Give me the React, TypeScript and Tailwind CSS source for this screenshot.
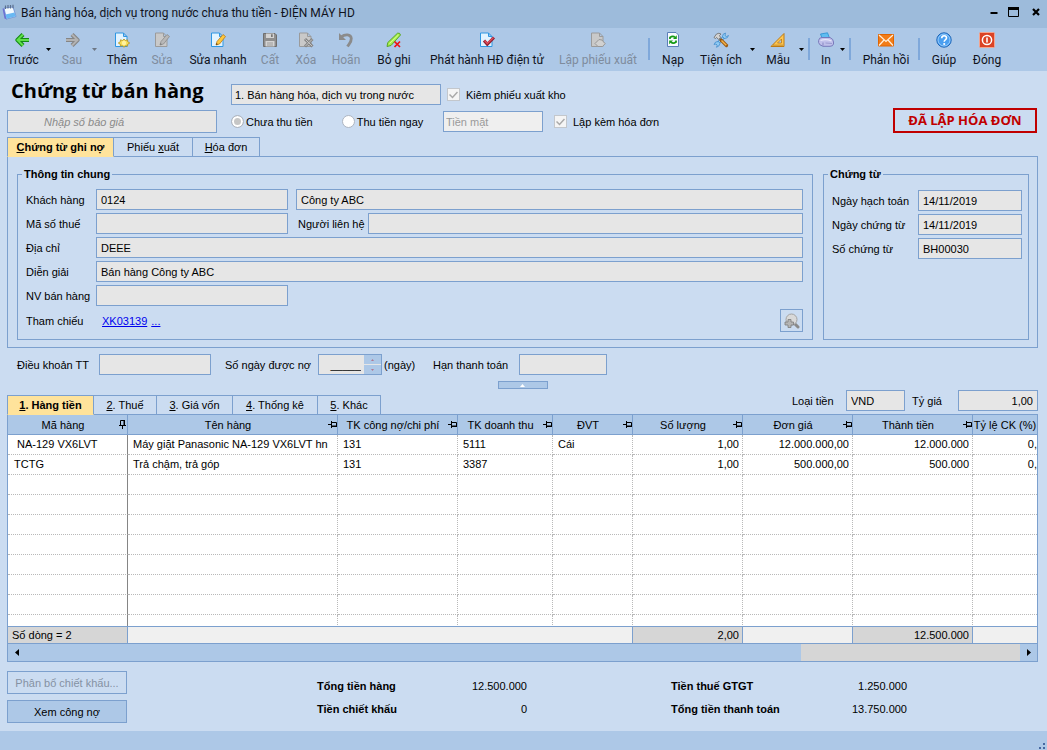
import type { ReactNode } from "react";
import clsx from "clsx";

const FIELD = "h-[21px] min-w-0 border border-[#7ca0ce] bg-[#e6e6e6] px-1 text-[11px] leading-4 text-black outline-none";

/* ---------- toolbar icons ---------- */

function Icon({ children }: { children: ReactNode }) {
  return (
    <svg viewBox="0 0 16 16" className="size-4 shrink-0" aria-hidden="true">
      {children}
    </svg>
  );
}

function Page({ muted }: { muted?: boolean }) {
  return (
    <path
      d="M1.5 1H9.5L13 4.5V14.5H1.5Z M9.5 1V4.5H13"
      fill={muted ? "#c9c9c9" : "#e2f3ff"}
      stroke={muted ? "#9b9b9b" : "#2e97e3"}
    />
  );
}

function Arrow({ muted, right }: { muted?: boolean; right?: boolean }) {
  const d = right ? "M8 2.5 13.5 8 8 13.5M13 8H2" : "M8 2.5 2.500 8 8 13.5M3 8H14";
  return (
    <Icon>
      <path d={d} fill="none" stroke={muted ? "#858585" : "#148a14"} strokeWidth="4.2" strokeLinejoin="round" />
      <path d={d} fill="none" stroke={muted ? "#b2b2b2" : "#5fe04a"} strokeWidth="2" />
    </Icon>
  );
}

function PencilPage({ muted }: { muted?: boolean }) {
  return (
    <Icon>
      <Page muted={muted} />
      <path d="M6 13 7 9.5 13 2.5 15.5 4.5 9.5 12Z" fill={muted ? "#b8b8b8" : "#ffc83d"} stroke={muted ? "#8b8b8b" : "#b87a1c"} strokeWidth=".8" />
      <path d="M6 13 6.5 11 8 12.3Z" fill={muted ? "#777" : "#5a3b12"} />
    </Icon>
  );
}

const icons = {
  back: <Arrow />,
  forward: <Arrow muted right />,
  add: (
    <Icon>
      <Page />
      <path d="M10 7 11.5 8.5 13.5 7.8 13.7 9.7 15.7 11 13.7 12.3 13.5 14.2 11.5 13.7 10 15.3 8.5 13.7 6.5 14.2 6.3 12.3 4.3 11 6.3 9.7 6.5 7.8 8.5 8.5Z" fill="#f5dc55" stroke="#b8901a" strokeWidth=".8" />
      <circle cx="10" cy="11" r="2.2" fill="#fff2a0" />
    </Icon>
  ),
  edit: <PencilPage muted />,
  quickEdit: <PencilPage />,
  save: (
    <Icon>
      <path d="M1.5 1.5H13L14.5 3V14.5H1.5Z" fill="#8f8f8f" stroke="#6f6f6f" />
      <path d="M4 1.5H12V6H4Z M3.5 9H12.5V14.5H3.5Z" fill="#d4d4d4" />
      <path d="M9 2.3H10.7V5H9Z" fill="#777" />
      <path d="M5 11H11M5 13H11" stroke="#9c9c9c" />
    </Icon>
  ),
  remove: (
    <Icon>
      <Page muted />
      <path d="M7 7 14.5 14.5M14.5 7 7 14.5" stroke="#858585" strokeWidth="3" />
      <path d="M7.5 7.5 14 14M14 7.5 7.5 14" stroke="#c6c6c6" />
    </Icon>
  ),
  undo: (
    <Icon>
      <path d="M3 5C7 2 13 2 13.3 6.5 13.5 10 11 12 9.5 14.5" fill="none" stroke="#8b8b8b" strokeWidth="2.8" />
      <path d="M1 1V8H8Z" fill="#8b8b8b" />
    </Icon>
  ),
  unpost: (
    <Icon>
      <path d="M1 14.5 1.8 10.5 11.5 1.2Q14 .5 14.5 3L5 13.5Z" fill="#a5ec4a" stroke="#4f9f1c" strokeWidth=".9" />
      <path d="M3.5 11.5 12.5 3" stroke="#dcff9c" />
      <path d="M8.5 9.5 14 15M14 9.5 8.5 15" stroke="#ee1212" strokeWidth="1.7" />
    </Icon>
  ),
  invoice: (
    <Icon>
      <Page />
      <path d="M5 8.5 8.3 12.3 15 5.5" fill="none" stroke="#8d2131" strokeWidth="3" />
      <path d="M5.5 8.5 8.3 11.5 14.5 5.5" fill="none" stroke="#e34c5c" strokeWidth="1.3" />
    </Icon>
  ),
  stockOut: (
    <Icon>
      <Page muted />
      <path d="M5 11.5 7.5 9 9 7.5 12 8 13 9.5 15.3 11.5 12.5 14.5H8Z" fill="#d1d1d1" stroke="#989898" />
    </Icon>
  ),
  reload: (
    <Icon>
      <path d="M2.5 .5H11L13.5 3V14.5H2.5Z" fill="#f6faff" stroke="#5b7fb8" />
      <path d="M5 7V5.5Q8 3.3 10 5.5M11 8.5V10Q8 12.3 6 10" fill="none" stroke="#159a15" strokeWidth="1.8" />
      <path d="M8 7H11.8V3.2ZM8 8.5H4.2V12.300Z" fill="#159a15" />
    </Icon>
  ),
  tools: (
    <Icon>
      <path d="M3.5 12.5 12 4" stroke="#3a86c8" strokeWidth="3" />
      <path d="M3.5 12.5 12 4" stroke="#9ed3f7" strokeWidth="1.3" />
      <path d="M12.5 1Q9.500 1.500 9.500 4.500L11.500 6.500Q15 6.500 15.500 3.500L13.500 4.500 12 3.500Z M5.500 9.500Q2 9 1 12.500L3 12 4.200 13.200 3.500 15.300Q6.500 14.500 7 11.500Z" fill="#8fcaf3" stroke="#3a86c8" strokeWidth=".7" />
      <path d="M8 8 13.5 13.5" stroke="#9a5a12" strokeWidth="3.2" strokeLinecap="round" />
      <path d="M8.5 8.5 13.3 13.3" stroke="#f6b44a" strokeWidth="1.4" />
      <path d="M1 5.5 3.5 2Q6 .5 8 2L6.5 3.5 7.5 5.500 5.5 7.3 3.5 5.5 2.5 6.5Z" fill="#d4d4d4" stroke="#6a6a6a" strokeWidth=".8" />
    </Icon>
  ),
  template: (
    <Icon>
      <path d="M1 14.500 14 1.500V14.500Z" fill="#ffc650" stroke="#bd7a14" />
      <path d="M7.5 11 11.5 7V11Z" fill="#adc8e7" stroke="#bd7a14" strokeWidth=".8" />
      <path d="M4 14V12.5M6 14V12.5M8 14V12.5M10 14V12.5M12 14V12.5" stroke="#8c5a10" strokeWidth=".7" />
    </Icon>
  ),
  print: (
    <Icon>
      <path d="M4 6 2.500 2 9.5 .8 11.5 6Z" fill="#5fbdf1" stroke="#2a8fd0" strokeWidth=".8" />
      <path d="M.6 8.5Q1 5.500 4 5.5L12 5.5Q15.5 7 15.5 10V12Q15 14.3 12 14.3H5Q.8 13 .6 10.5Z" fill="#c0c0ea" stroke="#7272b6" strokeWidth=".9" />
      <path d="M2.5 8.5Q8 6.500 13.5 9" fill="none" stroke="#e6e6fa" strokeWidth="1.3" />
      <path d="M5 10.5V13.500" stroke="#8585c2" strokeWidth="1" />
      <path d="M7.500 11 14 11.5" stroke="#9a9ad0" strokeWidth="1" />
    </Icon>
  ),
  mail: (
    <Icon>
      <path d="M.5 2.5H15.5V14H.5Z" fill="#f27c17" stroke="#e06400" />
      <path d="M1 3 8 9.5 15 3M1 13.5 6 8M15 13.5 10 8" fill="none" stroke="#fff0dc" strokeWidth="1.2" />
    </Icon>
  ),
  help: (
    <Icon>
      <circle cx="8" cy="8" r="7.2" fill="#4a9ff0" stroke="#1c64b6" />
      <circle cx="8" cy="8" r="6" fill="none" stroke="#b5dcff" strokeWidth=".7" />
      <path d="M5.7 6.2Q5.8 3.8 8.2 3.8T10.5 6Q10.5 7 9.3 7.8 8.2 8.5 8.2 9.8" fill="none" stroke="#fff" strokeWidth="1.6" />
      <circle cx="8.2" cy="12" r="1.1" fill="#fff" />
    </Icon>
  ),
  close: (
    <Icon>
      <rect x=".5" y=".5" width="15" height="15" rx="1" fill="#db4325" stroke="#f3a48e" />
      <circle cx="8" cy="8" r="4.6" fill="none" stroke="#fff" strokeWidth="1.5" />
      <path d="M8 5.5V10.5" stroke="#fff" strokeWidth="1.6" />
    </Icon>
  ),
};

/* ---------- toolbar ---------- */

function Tool({ icon, label, width, muted }: { icon: ReactNode; label: string; width: string; muted?: boolean }) {
  return (
    <button
      type="button"
      disabled={muted}
      className={clsx("flex shrink-0 flex-col items-center gap-1 whitespace-nowrap font-[Roboto,sans-serif] text-xs leading-4", width, muted ? "text-[#7f8c9d]" : "text-[#10131c]")}
    >
      {icon}
      <span>{label}</span>
    </button>
  );
}

function DropArrow({ width, label, muted }: { width: string; label: string; muted?: boolean }) {
  return (
    <button type="button" aria-label={label} disabled={muted} className={clsx("flex shrink-0 justify-center pt-4", width)}>
      <svg viewBox="0 0 5 3" className="h-[3px] w-[5px] shrink-0">
        <path d="M0 0H5L2.5 3Z" fill={muted ? "#6d7785" : "#000"} />
      </svg>
    </button>
  );
}

function Separator({ width }: { width: string }) {
  return (
    <div className={clsx("flex shrink-0 justify-center pt-[6px]", width)}>
      <div className="h-[22px] w-[2px] bg-[#7fa8da]" />
    </div>
  );
}

function Toolbar() {
  return (
    <div className="flex h-[43px] items-start overflow-hidden bg-[#adc8e7] pt-1 pl-1">
      <Tool icon={icons.back} label="Trước" width="w-[38px]" />
      <DropArrow width="w-3" label="Chứng từ trước" />
      <Tool icon={icons.forward} label="Sau" width="w-9" muted />
      <DropArrow width="w-2" label="Chứng từ sau" muted />
      <Tool icon={icons.add} label="Thêm" width="w-12" />
      <Tool icon={icons.edit} label="Sửa" width="w-8" muted />
      <Tool icon={icons.quickEdit} label="Sửa nhanh" width="w-20" />
      <Tool icon={icons.save} label="Cất" width="w-6" muted />
      <Tool icon={icons.remove} label="Xóa" width="w-12" muted />
      <Tool icon={icons.undo} label="Hoãn" width="w-8" muted />
      <Tool icon={icons.unpost} label="Bỏ ghi" width="w-16" />
      <Tool icon={icons.invoice} label="Phát hành HĐ điện tử" width="w-[122px]" />
      <Tool icon={icons.stockOut} label="Lập phiếu xuất" width="w-[100px]" muted />
      <Separator width="w-[2px]" />
      <Tool icon={icons.reload} label="Nạp" width="w-[46px]" />
      <Tool icon={icons.tools} label="Tiện ích" width="w-[50px]" />
      <DropArrow width="w-3" label="Chọn tiện ích" />
      <Tool icon={icons.template} label="Mẫu" width="w-10" />
      <DropArrow width="w-[6px]" label="Chọn mẫu" />
      <Separator width="w-[10px]" />
      <Tool icon={icons.print} label="In" width="w-6" />
      <DropArrow width="w-2" label="Chọn mẫu in" />
      <Separator width="w-2" />
      <Tool icon={icons.mail} label="Phản hồi" width="w-16" />
      <Separator width="w-[2px]" />
      <Tool icon={icons.help} label="Giúp" width="w-12" />
      <Tool icon={icons.close} label="Đóng" width="w-[38px]" />
    </div>
  );
}

function TitleBar() {
  return (
    <div className="flex h-7 items-center bg-[#9dbbdb] pr-[7px] pb-1 pl-[2px]">
      <svg viewBox="0 0 16 16" className="mr-[3px] size-4 shrink-0" aria-hidden="true">
        <path d="M.5 4.5 2.500 14.500 5 15.500 4 5Z" fill="#6f6fd2" />
        <path d="M2 4 11 3 14 12.5 4.500 15Z" fill="#f2faff" stroke="#5b7fd0" strokeWidth=".7" />
        <path d="M3.500 10.500 12.5 8.500 13.800 12.3 4.600 14.700Z" fill="#68b8f2" />
        <path d="M3.500 1.500V5M6 1V4.5M8.500 1V4.5M11 .8V4.300" stroke="#5b6f8d" strokeWidth="1.2" />
      </svg>
      <div className="flex-1 pt-[2px] font-[Roboto,sans-serif] text-xs leading-5 whitespace-nowrap text-[#10131c]">
        Bán hàng hóa, dịch vụ trong nước chưa thu tiền - ĐIỆN MÁY HD
      </div>
      <div className="flex items-center gap-[10px]">
        <button type="button" aria-label="Thu nhỏ">
          <svg viewBox="0 0 8 10" className="h-[10px] w-2"><path d="M.5 6H7.5" stroke="#000" strokeWidth="2" /></svg>
        </button>
        <button type="button" aria-label="Phóng to">
          <svg viewBox="0 0 11 10" className="h-[10px] w-[11px]"><path d="M.5 2V9.5H10.5V2" fill="none" stroke="#000" /><path d="M0 1.5H11" stroke="#000" strokeWidth="3" /></svg>
        </button>
        <button type="button" aria-label="Đóng cửa sổ" className="ml-[3px]">
          <svg viewBox="0 0 8 8" className="size-2"><path d="M1 1 7 7M7 1 1 7" stroke="#000" strokeWidth="2.2" /></svg>
        </button>
      </div>
    </div>
  );
}

/* ---------- form parts ---------- */

function Text({ id, value = "", className }: { id: string; value?: string; className?: string }) {
  return <input id={id} type="text" readOnly defaultValue={value} className={clsx(FIELD, className)} />;
}

function Check({ id, label, className }: { id: string; label: string; className?: string }) {
  return (
    <label htmlFor={id} className={clsx("flex items-center gap-[6px] whitespace-nowrap", className)}>
      <span className="grid size-[13px] place-items-center">
        <input id={id} type="checkbox" defaultChecked className="peer col-start-1 row-start-1 size-[13px] appearance-none border border-[#c3c7cc] bg-[#f5f5f5]" />
        <svg viewBox="0 0 9 8" className="pointer-events-none col-start-1 row-start-1 hidden h-2 w-[9px] peer-checked:block">
          <path d="M.5 3.5 3.5 6.5 8.5 1" fill="none" stroke="#a9a9a9" strokeWidth="1.5" />
        </svg>
      </span>
      {label}
    </label>
  );
}

function Radio({ id, label, checked }: { id: string; label: string; checked?: boolean }) {
  return (
    <label htmlFor={id} className="flex items-center gap-[2px] whitespace-nowrap">
      <input
        id={id}
        type="radio"
        name="payment"
        defaultChecked={checked}
        className="size-[13px] appearance-none rounded-full border border-[#adb5c1] bg-white checked:bg-[#c6c6c6] checked:shadow-[inset_0_0_0_2px_#fff]"
      />
      {label}
    </label>
  );
}

function Tabs({ items, label }: { items: { before?: string; key: string; after: string; width: string }[]; label: string }) {
  return (
    <div role="tablist" aria-label={label} className="flex">
      {items.map((t, i) => (
        <button
          key={t.key}
          type="button"
          role="tab"
          aria-selected={i === 0}
          className={clsx(
            "h-5 border-y border-r border-[#7ca0ce] leading-[18px] whitespace-nowrap",
            t.width,
            i === 0 && "relative z-10 border-l border-b-[#ffe39b] bg-[#ffe39b] font-bold",
          )}
        >
          {t.before}
          <u className="underline-offset-1">{t.key}</u>
          {t.after}
        </button>
      ))}
    </div>
  );
}

function Header() {
  return (
    <div className="flex items-end pt-[7px]">
      <div className="w-[210px] shrink-0">
        <h1 className="pl-1 font-['Open_Sans',sans-serif] text-[20px] leading-[26px] font-bold whitespace-nowrap">Chứng từ bán hàng</h1>
        <input
          type="text"
          aria-label="Nhập số báo giá"
          placeholder="Nhập số báo giá"
          className="mt-[6px] block h-[23px] w-full border border-[#7ca0ce] bg-[#e6e6e6] pl-9 text-[11px] italic placeholder:text-[#8a8a8a]"
        />
      </div>
      <div className="ml-[14px] flex flex-col gap-[6px] pb-px">
        <div className="flex">
          <select aria-label="Loại chứng từ" className="h-[21px] w-[210px] appearance-none border border-[#7ca0ce] bg-[#e6e6e6] px-[3px] text-[11px]">
            <option>1. Bán hàng hóa, dịch vụ trong nước</option>
          </select>
          <Check id="with-stock" label="Kiêm phiếu xuất kho" className="ml-[6px]" />
        </div>
        <div className="flex">
          <div className="flex w-[212px] gap-[29px]">
            <Radio id="unpaid" label="Chưa thu tiền" checked />
            <Radio id="paid" label="Thu tiền ngay" />
          </div>
          <select aria-label="Hình thức thanh toán" disabled className="h-[21px] w-[100px] appearance-none border border-[#7ca0ce] bg-[#efefef] px-[2px] text-[11px] text-[#9a9a9a] opacity-100">
            <option>Tiền mặt</option>
          </select>
          <Check id="with-invoice" label="Lập kèm hóa đơn" className="ml-[11px]" />
        </div>
      </div>
      <div className="mr-px ml-auto w-36 border-2 border-[#c00000] text-center font-['Open_Sans',sans-serif] text-[13px] leading-[21px] font-bold whitespace-nowrap text-[#c00000]">
        ĐÃ LẬP HÓA ĐƠN
      </div>
    </div>
  );
}

function GeneralInfo() {
  return (
    <fieldset className="min-w-0 flex-1 border border-[#7ca0ce] pr-[9px] pb-[7px] pl-2">
      <legend className="-ml-1 px-[2px] leading-3 font-bold">Thông tin chung</legend>
      <div className="grid grid-cols-[70px_192px_1fr] items-center gap-y-[3px] pt-[9px]">
        <label htmlFor="customer">Khách hàng</label>
        <Text id="customer" value="0124" />
        <input aria-label="Tên khách hàng" readOnly defaultValue="Công ty ABC" className={clsx(FIELD, "ml-2")} />
        <label htmlFor="tax">Mã số thuế</label>
        <Text id="tax" />
        <div className="flex items-center pl-[10px]">
          <label htmlFor="contact" className="w-[70px] whitespace-nowrap">Người liên hệ</label>
          <Text id="contact" className="flex-1" />
        </div>
        <label htmlFor="address">Địa chỉ</label>
        <Text id="address" value="DEEE" className="col-span-2" />
        <label htmlFor="note">Diễn giải</label>
        <Text id="note" value="Bán hàng Công ty ABC" className="col-span-2" />
        <label htmlFor="seller">NV bán hàng</label>
        <Text id="seller" />
        <span />
        <span>Tham chiếu</span>
        <div className="flex gap-1 pl-[6px] text-[#0000ee]">
          <a href="#XK03139" className="underline">XK03139</a>
          <a href="#more" className="underline">...</a>
        </div>
        <button type="button" aria-label="Xem tham chiếu" className="flex size-[23px] items-center justify-center justify-self-end border border-[#7ca0ce]">
          <svg viewBox="0 0 16 16" className="size-4">
            <path d="M10.500 10.500 14 14" stroke="#8a8a8a" strokeWidth="3" strokeLinecap="round" />
            <circle cx="7.500" cy="6.500" r="5.500" fill="#d9d9d9" stroke="#a3a3a3" />
            <path d="M4 6.5H7V9H9.500V12H7V14.5H4V12H1V9H4Z" fill="#b5b5b5" stroke="#7c7c7c" strokeWidth=".8" />
          </svg>
        </button>
      </div>
    </fieldset>
  );
}

function VoucherInfo() {
  return (
    <fieldset className="w-[206px] shrink-0 border border-[#7ca0ce] px-[6px]">
      <legend className="-ml-[2px] px-[2px] leading-3 font-bold">Chứng từ</legend>
      <div className="grid grid-cols-[86px_1fr] items-center gap-y-[3px] pt-[10px] pl-[2px]">
        <label htmlFor="posted">Ngày hạch toán</label>
        <Text id="posted" value="14/11/2019" />
        <label htmlFor="dated">Ngày chứng từ</label>
        <Text id="dated" value="14/11/2019" />
        <label htmlFor="number">Số chứng từ</label>
        <Text id="number" value="BH00030" />
      </div>
    </fieldset>
  );
}

function Terms() {
  return (
    <div className="flex items-center pt-[6px] pl-[10px] whitespace-nowrap">
      <label htmlFor="terms" className="w-[82px]">Điều khoản TT</label>
      <Text id="terms" className="w-28" />
      <label htmlFor="days" className="ml-[14px] w-[93px]">Số ngày được nợ</label>
      <div className="flex h-[21px] w-16 border border-[#7ca0ce] bg-[#e6e6e6]">
        <input id="days" type="text" readOnly defaultValue="_____" className="w-[45px] pr-[3px] text-right text-[11px]" />
        <div className="flex flex-1 flex-col gap-px bg-[#e6e6e6]">
          <button type="button" aria-label="Tăng" className="flex flex-1 items-center justify-center bg-[#adc8e7]">
            <svg viewBox="0 0 3 2" className="h-[2px] w-[3px]"><path d="M0 2 1.5 0 3 2Z" fill="#b07a94" /></svg>
          </button>
          <button type="button" aria-label="Giảm" className="flex flex-1 items-center justify-center bg-[#adc8e7]">
            <svg viewBox="0 0 3 2" className="h-[2px] w-[3px]"><path d="M0 0 1.5 2 3 0Z" fill="#b07a94" /></svg>
          </button>
        </div>
      </div>
      <span className="ml-[2px] w-[49px]">(ngày)</span>
      <label htmlFor="due" className="w-[86px]">Hạn thanh toán</label>
      <Text id="due" className="w-[88px]" />
    </div>
  );
}

/* ---------- item grid ---------- */

const columns = [
  { title: "Mã hàng", width: "w-[120px]" },
  { title: "Tên hàng", width: "w-[210px]" },
  { title: "TK công nợ/chi phí", width: "w-[120px]" },
  { title: "TK doanh thu", width: "w-[95px]" },
  { title: "ĐVT", width: "w-[80px]" },
  { title: "Số lượng", width: "w-[110px]" },
  { title: "Đơn giá", width: "w-[110px]" },
  { title: "Thành tiền", width: "w-[120px]" },
  { title: "Tỷ lệ CK (%)", width: "" },
];

const LAST = columns.length - 1;

const rows = [
  ["\u00a0NA-129 VX6LVT", "Máy giặt Panasonic NA-129 VX6LVT hn", "131", "5111", "Cái", "1,00", "12.000.000,00", "12.000.000", "0,"],
  ["TCTG", "Trả chậm, trả góp", "131", "3387", "", "1,00", "500.000,00", "500.000", "0,"],
];

const EMPTY_ROWS = 8;

function cellClass(i: number) {
  return clsx(
    "h-5 border-b border-b-[#b9b9b9] p-0 leading-[19px] whitespace-nowrap [border-bottom-style:dotted]",
    i === 0 && "border-r border-r-[#858585] pl-[6px]",
    i > 0 && i < LAST && "border-r border-r-[#b9b9b9] pr-[3px] pl-[5px] [border-right-style:dotted]",
    i > 4 && "text-right",
  );
}

function Pin({ upright }: { upright?: boolean }) {
  return (
    <svg viewBox="0 0 9 9" className={clsx("size-[9px] shrink-0", upright && "-rotate-90")} aria-hidden="true">
      <path d="M0 4.5H3M3.5 1V8M3.5 2.5H8.5V6H3.5M3.5 6.5H9" fill="none" stroke="#000" />
    </svg>
  );
}

function ItemGrid() {
  return (
    <div className="-mt-px border border-[#7ca0ce] bg-white">
      <div className="h-[211px] overflow-hidden">
        <table className="w-full table-fixed border-separate border-spacing-0">
          <thead>
            <tr className="bg-[#adc8e7]">
              {columns.map((c, i) => (
                <th
                  key={c.title}
                  scope="col"
                  className={clsx("h-5 border-b border-[#7ca0ce] p-0 font-normal whitespace-nowrap", i < LAST && "border-r", c.width)}
                >
                  <div className="flex items-center">
                    <span className="flex-1">{c.title}</span>
                    {i < LAST && <Pin upright={i === 0} />}
                  </div>
                </th>
              ))}
            </tr>
          </thead>
          <tbody>
            {rows.map((r) => (
              <tr key={r[0]}>
                {r.map((cell, i) => (
                  <td key={i} className={cellClass(i)}>{cell}</td>
                ))}
              </tr>
            ))}
            {Array.from({ length: EMPTY_ROWS }, (_, n) => (
              <tr key={n}>
                {columns.map((c, i) => (
                  <td key={c.title} className={cellClass(i)} />
                ))}
              </tr>
            ))}
          </tbody>
        </table>
      </div>
      <table className="w-full table-fixed border-separate border-spacing-0 border-t border-[#7ca0ce] bg-[#f0f0f0]">
        <tbody>
          <tr>
            <td className="h-[17px] w-[120px] border-r border-b border-[#7ca0ce] bg-[#d6d6d6] p-0 pl-1 leading-4">Số dòng = 2</td>
            <td className="w-[505px] border-r border-b border-[#7ca0ce] p-0" />
            <td className="w-[110px] border-r border-b border-[#7ca0ce] bg-[#d6d6d6] p-0 pr-[3px] text-right leading-4">2,00</td>
            <td className="w-[110px] border-r border-b border-[#7ca0ce] p-0" />
            <td className="w-[120px] border-r border-b border-[#7ca0ce] bg-[#d6d6d6] p-0 pr-[3px] text-right leading-4">12.500.000</td>
            <td className="border-b border-[#7ca0ce] p-0" />
          </tr>
        </tbody>
      </table>
      <div className="flex h-[17px] bg-[#d6d6d6]">
        <button type="button" aria-label="Cuộn trái" className="flex w-[17px] items-center justify-center bg-[#adc8e7]">
          <svg viewBox="0 0 4 7" className="h-[7px] w-1"><path d="M4 0V7L0 3.5Z" /></svg>
        </button>
        <div className="w-[776px] bg-[#adc8e7]" />
        <button type="button" aria-label="Cuộn phải" className="ml-auto flex w-[17px] items-center justify-center bg-[#adc8e7]">
          <svg viewBox="0 0 4 7" className="h-[7px] w-1"><path d="M0 0V7L4 3.5Z" /></svg>
        </button>
      </div>
    </div>
  );
}

function Totals() {
  return (
    <div className="flex items-start pt-[9px]">
      <div className="flex w-[310px] flex-col gap-[6px]">
        <button type="button" disabled className="h-[23px] w-[120px] border border-[#7ca0ce] text-[#8591a3]">Phân bổ chiết khấu...</button>
        <button type="button" className="h-[23px] w-[120px] border border-[#7ca0ce] bg-[#adc8e7]">Xem công nợ</button>
      </div>
      <dl className="grid grid-cols-[110px_100px_144px_126px_110px] gap-y-[7px] pt-[7px] leading-4">
        <dt className="font-bold whitespace-nowrap">Tổng tiền hàng</dt>
        <dd className="text-right">12.500.000</dd>
        <dt className="col-start-4 font-bold whitespace-nowrap">Tiền thuế GTGT</dt>
        <dd className="text-right">1.250.000</dd>
        <dt className="font-bold whitespace-nowrap">Tiền chiết khấu</dt>
        <dd className="text-right">0</dd>
        <dt className="col-start-4 font-bold whitespace-nowrap">Tổng tiền thanh toán</dt>
        <dd className="text-right">13.750.000</dd>
      </dl>
    </div>
  );
}

export default function App() {
  return (
    <div className="flex min-h-screen flex-col overflow-hidden bg-[#cbdcf1] font-['Liberation_Sans',Arial,sans-serif] text-[11px] leading-4 text-black">
      <TitleBar />
      <Toolbar />
      <main className="flex-1 pr-[9px] pb-2 pl-[7px]">
        <Header />
        <div className="mt-1">
          <Tabs
            label="Chứng từ"
            items={[
              { key: "C", after: "hứng từ ghi nợ", width: "w-[107px]" },
              { before: "Phiếu ", key: "x", after: "uất", width: "w-[79px]" },
              { key: "H", after: "óa đơn", width: "w-[67px]" },
            ]}
          />
        </div>
        <section className="-mt-px flex gap-[10px] border border-[#7ca0ce] pt-[11px] pr-2 pb-[7px] pl-[9px]">
          <GeneralInfo />
          <VoucherInfo />
        </section>
        <Terms />
        <div className="mt-[6px] flex justify-center">
          <button type="button" aria-label="Thu gọn" className="flex h-2 w-[50px] items-center justify-center border border-[#7ca0ce] bg-[#adc8e7]">
            <svg viewBox="0 0 5 3" className="h-[3px] w-[5px]"><path d="M0 3 2.5 0 5 3Z" fill="#fff" /></svg>
          </button>
        </div>
        <div className="mt-px flex items-start">
          <div className="mt-[5px]">
            <Tabs
              label="Chi tiết"
              items={[
                { key: "1", after: ". Hàng tiền", width: "w-[87px]" },
                { key: "2", after: ". Thuế", width: "w-[63px]" },
                { key: "3", after: ". Giá vốn", width: "w-[76px]" },
                { key: "4", after: ". Thống kê", width: "w-[85px]" },
                { key: "5", after: ". Khác", width: "w-[63px]" },
              ]}
            />
          </div>
          <div className="ml-auto flex items-center whitespace-nowrap">
            <label htmlFor="currency" className="w-[54px]">Loại tiền</label>
            <Text id="currency" value="VND" className="w-[59px]" />
            <label htmlFor="rate" className="ml-[7px] w-[46px]">Tỷ giá</label>
            <Text id="rate" value="1,00" className="w-20 text-right" />
          </div>
        </div>
        <ItemGrid />
        <Totals />
      </main>
      <footer className="flex h-[19px] items-end justify-end bg-[#adc8e7] pr-[2px] pb-px">
        <svg viewBox="0 0 6 6" className="size-[6px]" aria-hidden="true">
          <path d="M0 4H2V6H0ZM4 4H6V6H4ZM4 0H6V2H4Z" fill="#4668a0" />
        </svg>
      </footer>
    </div>
  );
}
